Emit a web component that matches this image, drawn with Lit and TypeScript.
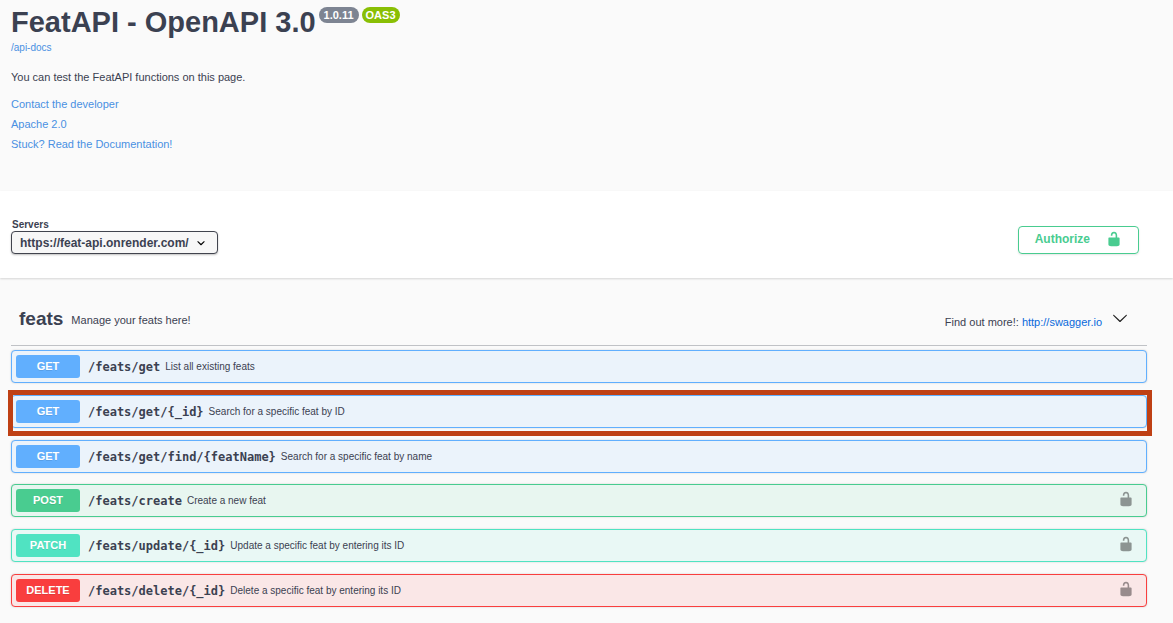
import { LitElement, html, css, nothing } from "lit";
import { customElement } from "lit/decorators.js";
import { classMap } from "lit/directives/class-map.js";

interface Operation {
  method: "get" | "post" | "patch" | "delete";
  path: string;
  summary: string;
  secured?: boolean;
  highlighted?: boolean;
}

const READ_OPERATIONS: Operation[] = [
  { method: "get", path: "/feats/get", summary: "List all existing feats" },
  { method: "get", path: "/feats/get/{_id}", summary: "Search for a specific feat by ID", highlighted: true },
  { method: "get", path: "/feats/get/find/{featName}", summary: "Search for a specific feat by name" },
];

const WRITE_OPERATIONS: Operation[] = [
  { method: "post", path: "/feats/create", summary: "Create a new feat", secured: true },
  { method: "patch", path: "/feats/update/{_id}", summary: "Update a specific feat by entering its ID", secured: true },
  { method: "delete", path: "/feats/delete/{_id}", summary: "Delete a specific feat by entering its ID", secured: true },
];

const unlockedIcon = html`<svg class="icon" viewBox="0 0 20 20" aria-hidden="true">
  <path d="M15.8 8H14V5.6C14 2.703 12.665 1 10 1 7.334 1 6 2.703 6 5.6V6h2v-.801C8 3.754 8.797 3 10 3c1.203 0 2 .754 2 2.199V8H4c-.553 0-1 .646-1 1.199V17c0 .549.428 1.139.951 1.307l1.197.387C5.672 18.861 6.55 19 7.1 19h5.8c.549 0 1.428-.139 1.951-.307l1.196-.387c.524-.167.953-.757.953-1.306V9.199C17 8.646 16.352 8 15.8 8z"/>
</svg>`;

@customElement("app-root")
export class AppRoot extends LitElement {
  static styles = css`
    :host {
      display: block;
      min-height: 100vh;
      background: #fafafa;
      color: #3b4151;
      font-family: "Liberation Sans", Arial, sans-serif;
      font-size: 11px;
      line-height: 16px;
    }
    * {
      box-sizing: border-box;
    }
    h1, h2, p {
      margin: 0;
    }
    a {
      color: #4990e2;
      text-decoration: none;
    }
    button, select {
      font-family: inherit;
      color: inherit;
      margin: 0;
      cursor: pointer;
    }
    .icon {
      display: block;
      width: 16px;
      height: 16px;
      fill: currentColor;
    }
    .wrapper {
      padding: 0 26px 0 11px;
    }
    .info {
      padding-top: 4px;
      padding-bottom: 37px;
    }
    .title-row {
      display: flex;
      align-items: flex-start;
      gap: 3px;
    }
    h1 {
      font-size: 29px;
      line-height: 36px;
    }
    .badge {
      margin-top: 3px;
      padding: 0 5px;
      border-radius: 8px;
      background: #7d8492;
      color: #fff;
      font-size: 11px;
      line-height: 16px;
      font-weight: 700;
    }
    .badge.oas {
      background: #89bf04;
      padding: 0 4px;
    }
    .small {
      display: block;
      font-size: 10px;
      line-height: 16px;
    }
    .description {
      padding: 13px 0 9px;
    }
    .links {
      display: flex;
      flex-direction: column;
      align-items: flex-start;
      line-height: 20px;
    }
    .scheme {
      background: #fff;
      box-shadow: 0 1px 2px rgba(0, 0, 0, 0.15);
    }
    .scheme-inner {
      display: flex;
      justify-content: space-between;
      align-items: flex-end;
      padding-top: 28px;
      padding-bottom: 24px;
    }
    .servers label {
      display: block;
      padding-left: 1px;
      font-size: 10px;
      line-height: 12px;
      font-weight: 700;
    }
    .select-box {
      display: grid;
      align-items: center;
    }
    .select-box > * {
      grid-area: 1 / 1;
    }
    select {
      appearance: none;
      height: 23px;
      padding: 0 28px 0 8px;
      border: 1px solid #41444e;
      border-radius: 4px;
      background: #f7f7f7;
      box-shadow: 0 1px 2px rgba(0, 0, 0, 0.25);
      font-size: 12px;
      font-weight: 700;
    }
    .select-box .icon {
      justify-self: end;
      margin-right: 9px;
      color: #000;
      pointer-events: none;
    }
    .authorize {
      display: flex;
      align-items: center;
      gap: 16px;
      height: 28px;
      margin-right: 8px;
      padding: 0 16px 2px;
      border: 1px solid #49cc90;
      border-radius: 4px;
      background: transparent;
      box-shadow: 0 1px 2px rgba(0, 0, 0, 0.1);
      color: #49cc90;
      font-size: 12px;
      font-weight: 700;
    }
    .tag-section {
      padding-top: 24px;
      padding-bottom: 16px;
    }
    .tag {
      display: flex;
      align-items: center;
      height: 44px;
      padding: 0 16px 0 8px;
      margin-bottom: 4px;
      border-bottom: 1px solid rgba(59, 65, 81, 0.3);
    }
    h2 {
      font-size: 19px;
      line-height: 24px;
      padding-bottom: 10px;
    }
    .tag-text {
      flex: 1;
      padding: 0 8px;
      padding-bottom: 8px;
    }
    .tag-docs {
      padding: 0 8px 4px 0;
    }
    .tag-docs a {
      color: #0969da;
    }
    .toggle {
      display: block;
      padding: 0 3px 12px 2px;
      border: 0;
      background: none;
      color: #222;
    }
    .operations, .group {
      display: flex;
      flex-direction: column;
    }
    .operations {
      gap: 11px;
    }
    .group {
      gap: 12px;
    }
    .op {
      --tone: #61affe;
      --tint: #ebf3fb;
      position: relative;
      border: 1px solid var(--tone);
      border-radius: 4px;
      background: var(--tint);
      box-shadow: 0 0 2px rgba(0, 0, 0, 0.19);
    }
    .op.post {
      --tone: #49cc90;
      --tint: #e8f6f0;
    }
    .op.patch {
      --tone: #50e3c2;
      --tint: #e9f8f5;
    }
    .op.delete {
      --tone: #f93e3e;
      --tint: #fae7e7;
    }
    .op-summary {
      display: flex;
      align-items: center;
      width: 100%;
      padding: 4px;
      border: 0;
      background: none;
      text-align: left;
    }
    .method {
      width: 64px;
      border-radius: 3px;
      background: var(--tone);
      color: #fff;
      font-size: 11px;
      line-height: 23px;
      font-weight: 700;
      text-align: center;
      text-shadow: 0 1px 0 rgba(0, 0, 0, 0.1);
    }
    .path {
      padding: 0 5px 0 8px;
      font-family: "DejaVu Sans Mono", monospace;
      font-size: 12px;
      line-height: 16px;
      font-weight: 700;
    }
    .summary-text {
      flex: 1;
      font-size: 10px;
      line-height: 16px;
    }
    .lock {
      padding: 0 8px 4px;
      color: #8c9492;
    }
    .delete .lock {
      color: #988b8c;
    }
    .highlight {
      position: absolute;
      inset: -6px -6px -9px -4px;
      border: 5px solid #bf4014;
      pointer-events: none;
    }
  `;

  private renderOperation(op: Operation) {
    return html`<div class=${classMap({ op: true, [op.method]: true })}>
      <button class="op-summary" type="button">
        <span class="method">${op.method.toUpperCase()}</span>
        <span class="path">${op.path}</span>
        <span class="summary-text">${op.summary}</span>
        ${op.secured ? html`<span class="lock">${unlockedIcon}</span>` : nothing}
      </button>
      ${op.highlighted ? html`<div class="highlight"></div>` : nothing}
    </div>`;
  }

  render() {
    return html`
      <header class="wrapper info">
        <div class="title-row">
          <h1>FeatAPI - OpenAPI 3.0</h1>
          <span class="badge">1.0.11</span>
          <span class="badge oas">OAS3</span>
        </div>
        <a class="small" href="#api-docs">/api-docs</a>
        <p class="description">You can test the FeatAPI functions on this page.</p>
        <div class="links">
          <a href="#contact">Contact the developer</a>
          <a href="#license">Apache 2.0</a>
          <a href="#documentation">Stuck? Read the Documentation!</a>
        </div>
      </header>

      <section class="scheme">
        <div class="wrapper scheme-inner">
          <div class="servers">
            <label for="servers">Servers</label>
            <div class="select-box">
              <select id="servers">
                <option>https://feat-api.onrender.com/</option>
              </select>
              <svg class="icon" viewBox="0 0 20 20" aria-hidden="true">
                <path d="M13.418 7.859c.271-.268.709-.268.978 0 .27.268.272.701 0 .969l-3.908 3.83c-.27.268-.707.268-.979 0l-3.908-3.83c-.27-.267-.27-.701 0-.969.271-.268.709-.268.978 0L10 11l3.418-3.141z"/>
              </svg>
            </div>
          </div>
          <button class="authorize" type="button"><span>Authorize</span>${unlockedIcon}</button>
        </div>
      </section>

      <main class="wrapper tag-section">
        <div class="tag">
          <h2>feats</h2>
          <p class="tag-text">Manage your feats here!</p>
          <p class="tag-docs">Find out more!: <a href="#swagger">http://swagger.io</a></p>
          <button class="toggle" type="button" aria-label="Collapse operations">
            <svg class="icon" viewBox="0 0 20 20" aria-hidden="true">
              <path d="M17.418 6.109c.272-.268.709-.268.979 0s.271.701 0 .969l-7.908 7.83c-.27.268-.707.268-.979 0l-7.908-7.83c-.27-.268-.27-.701 0-.969.271-.268.709-.268.979 0L10 13.25l7.418-7.141z"/>
            </svg>
          </button>
        </div>
        <div class="operations">
          <div class="group">${READ_OPERATIONS.map((op) => this.renderOperation(op))}</div>
          <div class="group">${WRITE_OPERATIONS.map((op) => this.renderOperation(op))}</div>
        </div>
      </main>
    `;
  }
}
